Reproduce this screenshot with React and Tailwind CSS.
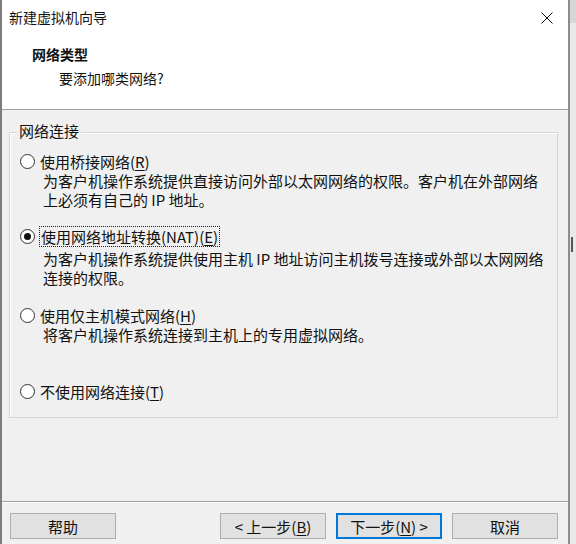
import React from 'react';

const font = { fontFamily: '"Noto Sans CJK SC", "Microsoft YaHei", "Noto Sans", sans-serif' };

function Radio({ checked }) {
  return (
    <span className="flex h-[15px] w-[15px] shrink-0 items-center justify-center rounded-full border border-[#333] bg-white">
      {checked && <span className="h-[7px] w-[7px] rounded-full bg-[#111]" />}
    </span>
  );
}

function Button({ children, primary, className = '' }) {
  return (
    <button
      className={`flex h-[26px] w-[106px] items-center justify-center bg-[#e1e1e1] text-[15px] leading-none text-[#111] ${
        primary ? 'border-2 border-[#0078d7]' : 'border border-[#adadad]'
      } ${className}`}
    >
      {children}
    </button>
  );
}

export default function App() {
  return (
    <div className="flex h-[544px] w-[576px] overflow-hidden bg-[#e6e6e6] text-[#111]" style={font}>
      {/* dialog window */}
      <div className="flex h-[544px] w-[570px] shrink-0 flex-col border-l-2 border-r-2 border-l-[#7d7d7d] border-r-[#8c8c8c] bg-[#f0f0f0]">
        {/* header */}
        <div className="h-[109px] bg-white">
          <div className="flex h-[35px] items-center justify-between pl-[7px] pr-[14px]">
            <span className="text-[14px] leading-[19px]">新建虚拟机向导</span>
            <svg width="12" height="12" viewBox="0 0 12 12" className="mr-[1px]">
              <path d="M0.5 0.5 L11.5 11.5 M11.5 0.5 L0.5 11.5" stroke="#111" strokeWidth="1" fill="none" />
            </svg>
          </div>
          <div className="mt-[10px] pl-[30px] text-[14px] font-bold leading-[19px]">网络类型</div>
          <div className="mt-[5px] pl-[57px] text-[14px] leading-[19px]">要添加哪类网络?</div>
        </div>
        <div className="h-px bg-[#a0a0a0]" />

        {/* body */}
        <div className="h-[391px] px-[7px] pt-[22px]">
          <div className="relative h-[286px] w-[549px] border border-[#d5d5d5] pl-[10px] pt-[19px] text-[15px] shadow-[inset_1px_1px_0_#ffffff]">
            <span className="absolute -top-[12px] left-[7px] bg-[#f0f0f0] px-[2px] leading-[20px]">网络连接</span>

            <div className="flex h-[19px] items-center gap-[5px]">
              <Radio />
              <span className="leading-[19px]">
                使用桥接网络(<u className="underline-offset-2">R</u>)
              </span>
            </div>
            <div className="whitespace-nowrap pl-[23px] leading-[19px]">
              <div>为客户机操作系统提供直接访问外部以太网网络的权限。客户机在外部网络</div>
              <div>上必须有自己的 IP 地址。</div>
            </div>

            <div className="mt-[18px] flex h-[19px] items-center gap-[4px]">
              <Radio checked />
              <span className="border border-dotted border-[#222] px-[1px] leading-[19px]">
                使用网络地址转换(NAT)(<u className="underline-offset-2">E</u>)
              </span>
            </div>
            <div className="mt-[3px] whitespace-nowrap pl-[23px] leading-[19px]">
              <div>为客户机操作系统提供使用主机 IP 地址访问主机拨号连接或外部以太网网络</div>
              <div>连接的权限。</div>
            </div>

            <div className="mt-[19px] flex h-[19px] items-center gap-[5px]">
              <Radio />
              <span className="leading-[19px]">
                使用仅主机模式网络(<u className="underline-offset-2">H</u>)
              </span>
            </div>
            <div className="whitespace-nowrap pl-[23px] leading-[19px]">
              将客户机操作系统连接到主机上的专用虚拟网络。
            </div>

            <div className="mt-[38px] flex h-[19px] items-center gap-[5px]">
              <Radio />
              <span className="leading-[19px]">
                不使用网络连接(<u className="underline-offset-2">T</u>)
              </span>
            </div>
          </div>
        </div>

        {/* footer */}
        <div className="h-px bg-[#a0a0a0]" />
        <div className="h-px bg-white" />
        <div className="flex items-start pl-[8px] pr-[10px] pt-[10px]">
          <Button>帮助</Button>
          <div className="flex-1" />
          <Button>&lt; 上一步(<u className="underline-offset-2">B</u>)</Button>
          <Button primary className="ml-[10px]">下一步(<u className="underline-offset-2">N</u>) &gt;</Button>
          <Button className="ml-[10px]">取消</Button>
        </div>
      </div>

      {/* sliver of the window behind */}
      <div className="flex-1 bg-[#e9e9e9]">
        <div className="h-[23px] bg-[#d6d6d6]" />
        <div className="ml-[1px] mt-[214px] h-[15px] w-[2px] bg-[#555]" />
      </div>
    </div>
  );
}
